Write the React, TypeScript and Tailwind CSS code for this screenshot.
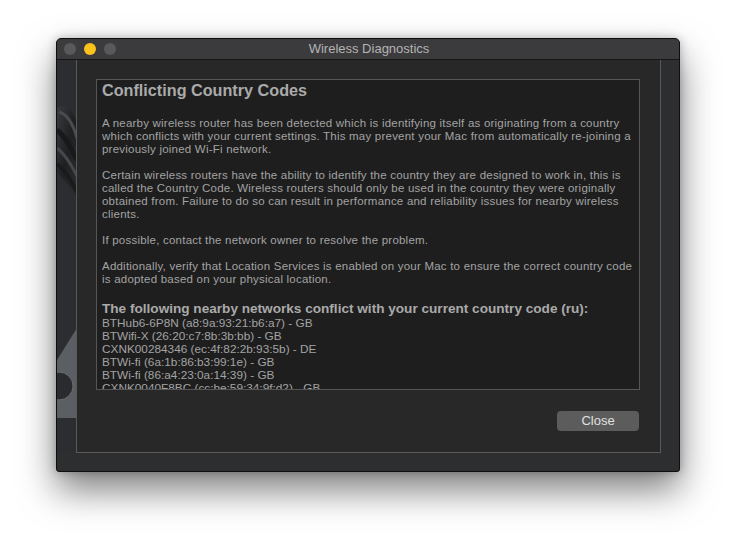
import React from "react";

const networks = [
  "BTHub6-6P8N (a8:9a:93:21:b6:a7) - GB",
  "BTWifi-X (26:20:c7:8b:3b:bb) - GB",
  "CXNK00284346 (ec:4f:82:2b:93:5b) - DE",
  "BTWi-fi (6a:1b:86:b3:99:1e) - GB",
  "BTWi-fi (86:a4:23:0a:14:39) - GB",
  "CXNK0040F8BC (cc:be:59:34:9f:d2) - GB",
];

function SideArt() {
  return (
    <svg width="20" height="392" viewBox="0 0 20 392" className="block">
      <rect width="20" height="392" fill="#2c2d30" />
      <defs>
        <linearGradient id="band" x1="0" y1="0" x2="1" y2="1">
          <stop offset="0" stopColor="#3a3b3e" />
          <stop offset="0.5" stopColor="#1f2022" />
          <stop offset="1" stopColor="#2c2d30" />
        </linearGradient>
      </defs>
      <path d="M0 48 C8 42 16 50 20 62 L20 140 C14 128 6 118 0 112 Z" fill="url(#band)" />
      <path d="M2 52 C10 54 16 64 20 78" stroke="#4a4b4f" strokeWidth="3" fill="none" />
      <path d="M0 70 C8 76 14 88 20 100" stroke="#18191b" strokeWidth="5" fill="none" />
      <path d="M0 88 C8 94 14 104 20 116" stroke="#46474b" strokeWidth="3" fill="none" />
      <path d="M0 104 C8 110 14 120 20 132" stroke="#1a1b1d" strokeWidth="4" fill="none" />
      <path d="M20 268 L20 358 L0 358 L0 300 Z" fill="#5b5e62" />
      <circle cx="2" cy="326" r="14" fill="#2a2b2e" />
      <circle cx="2" cy="326" r="14" fill="none" stroke="#6a6d71" strokeWidth="1" />
    </svg>
  );
}

export default function App() {
  return (
    <div
      className="w-[736px] h-[546px] bg-white pt-[38px] pl-[56px] overflow-hidden"
      style={{ fontFamily: '"Liberation Sans", Arial, sans-serif' }}
    >
      <div className="w-[624px] h-[434px] flex flex-col rounded-t-[5px] rounded-b-[3px] border border-[#0e0e0e] bg-[#2d2e30] shadow-[0_18px_36px_rgba(0,0,0,0.5),0_0_10px_rgba(0,0,0,0.25)] overflow-hidden">
        {/* Title bar */}
        <div className="h-[21px] shrink-0 flex items-center relative bg-[#3b3b3d] border-b border-[#161616]">
          <div className="flex gap-[8px] pl-[7px]">
            <div className="w-[12px] h-[12px] rounded-full bg-[#59595b]" />
            <div className="w-[12px] h-[12px] rounded-full bg-[#f9c31c]" />
            <div className="w-[12px] h-[12px] rounded-full bg-[#59595b]" />
          </div>
          <div className="absolute inset-0 flex items-center justify-center text-[13px] text-[#b3b3b3] pl-[2px]">
            Wireless Diagnostics
          </div>
        </div>
        {/* Body */}
        <div className="flex flex-1">
          <div className="w-[19px] shrink-0">
            <SideArt />
          </div>
          <div className="flex flex-col">
            <div className="w-[585px] h-[393px] border border-[#5a5a5a] border-t-0 bg-[#282828] flex flex-col pt-[19px] pl-[19px]">
              <div className="w-[544px] h-[311px] border border-[#565656] bg-[#1e1e1e] overflow-hidden pl-[5px] pr-[2px] text-[#a3a3a3] whitespace-nowrap">
                <div className="text-[16.2px] leading-[20px] font-bold text-[#aaaaaa]">
                  Conflicting Country Codes
                </div>
                <div className="mt-[17px] text-[11.5px] leading-[13px] tracking-[0.22px]">
                  <p>
                    A nearby wireless router has been detected which is identifying itself as originating from a country
                    <br />
                    which conflicts with your current settings. This may prevent your Mac from automatically re-joining a
                    <br />
                    previously joined Wi-Fi network.
                  </p>
                  <p className="mt-[13px]">
                    Certain wireless routers have the ability to identify the country they are designed to work in, this is
                    <br />
                    called the Country Code. Wireless routers should only be used in the country they were originally
                    <br />
                    obtained from. Failure to do so can result in performance and reliability issues for nearby wireless
                    <br />
                    clients.
                  </p>
                  <p className="mt-[13px]">If possible, contact the network owner to resolve the problem.</p>
                  <p className="mt-[13px]">
                    Additionally, verify that Location Services is enabled on your Mac to ensure the correct country code
                    <br />
                    is adopted based on your physical location.
                  </p>
                </div>
                <div className="mt-[14px] text-[13.6px] leading-[17px] font-bold text-[#aaaaaa]">
                  The following nearby networks conflict with your current country code (ru):
                </div>
                <div className="text-[11.8px] leading-[13px]">
                  {networks.map((n) => (
                    <div key={n}>{n}</div>
                  ))}
                </div>
              </div>
              <div className="flex justify-end pr-[21px] mt-[21px]">
                <button className="w-[82px] h-[20px] rounded-[4px] bg-[#5c5c5c] text-[13px] leading-[20px] text-[#e0e0e0]">
                  Close
                </button>
              </div>
            </div>
          </div>
          <div className="flex-1" />
        </div>
      </div>
    </div>
  );
}
